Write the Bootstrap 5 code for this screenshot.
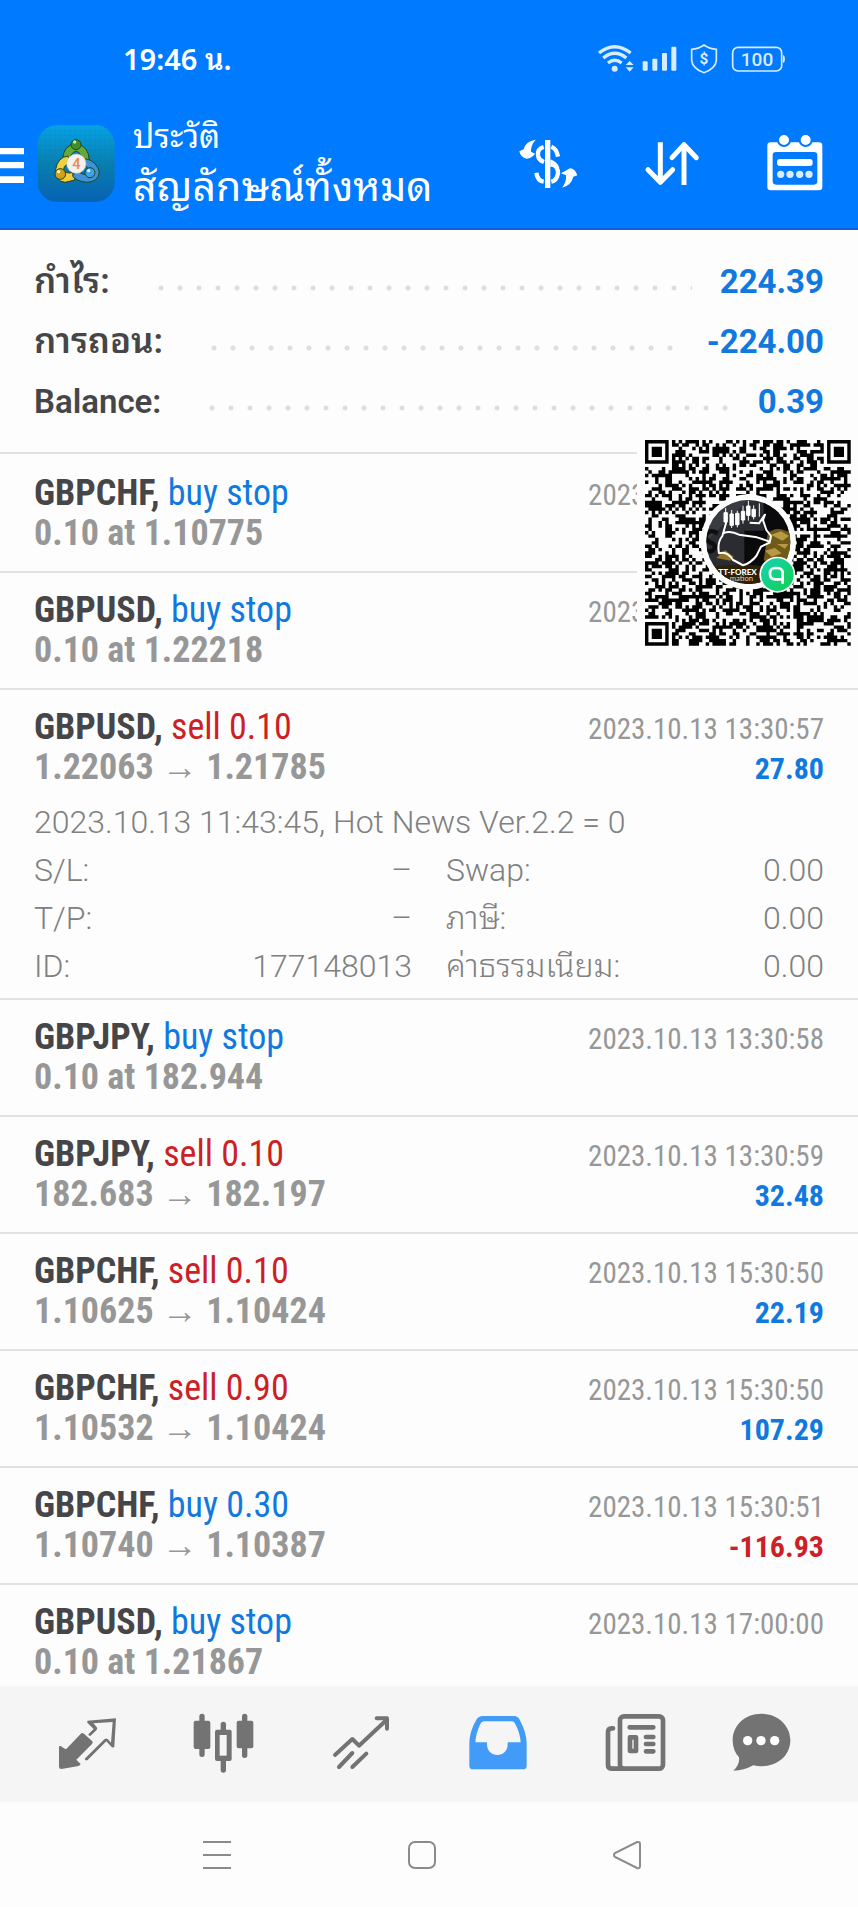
<!DOCTYPE html>
<html lang="th">
<head>
<meta charset="utf-8">
<meta name="viewport" content="width=device-width, initial-scale=1">
<title>ประวัติ</title>
<link href="https://cdn.jsdelivr.net/npm/bootstrap@5.3.0/dist/css/bootstrap.min.css" rel="stylesheet">
<style>
:root{--app-blue:#007aff;--buy:#1079e0;--sell:#cc1f26;--ink:#464649;--muted:#979797;--line:#e2e2e2;--thai:"Noto Sans Thai Looped","Noto Looped Thai","Droid Sans Thai",Loma,Waree,Garuda,"Noto Sans Thai","Noto Sans",sans-serif;}
body{font-family:Roboto,var(--thai);background:#fdfdfd;color:var(--ink);}
.app-head{background:var(--app-blue);color:#fff;border-bottom:2px solid #1262d6;}
.status-bar{height:96px;padding:22px 71px 0 123px;font:600 29px/40px "Noto Sans",var(--thai);}
.title-bar{height:132px;padding-right:23px;}
.icon-btn{border:0;background:none;padding:0;color:inherit;display:block;}
.icon-btn svg,.status-bar svg{display:block;}
.app-logo{margin-top:25px;margin-left:-1px;}
.titles{margin-left:18px;padding-top:21px;}
.title-small{font-size:33px;line-height:40px;}
.title-main{font-size:41px;line-height:60px;}
.head-tools{gap:44px;padding-top:35px;}
.history{min-height:0;}
.summary{padding:22px 34px 20px;border-bottom:2px solid var(--line);font-size:33px;line-height:60px;}
.sum-line{height:60px;}
.summary dt{font-weight:600;}
.summary dd{font-weight:700;color:var(--buy);}
.summary .thai-label{font-size:35px;}
.leader{height:6px;margin:12px 28px 0 48px;background:radial-gradient(circle at 3px 3px,#dedede 2px,transparent 3px) 0 0/19px 6px repeat-x;}
.deal{padding:17px 34px 18px;border-bottom:2px solid var(--line);line-height:40px;font-family:"Roboto Condensed","Liberation Sans Narrow",Roboto,sans-serif;}
.summary + .deal{padding-top:19px;}
.deal-open{padding-bottom:8px;}
.deal-line{height:40px;}
.deal-name{font-size:36px;font-weight:400;}
.deal-name b{font-weight:700;}
.deal-price{font-size:36px;font-weight:700;color:var(--muted);}
.deal-date{font-size:29px;color:var(--muted);}
.deal-sum{font-size:30px;font-weight:700;}
.buy{color:var(--buy);}
.sell{color:var(--sell);}
.deal-more{margin-top:11px;font-family:Roboto,var(--thai);font-weight:300;font-size:32px;line-height:48px;color:#808080;}
.deal-more dt{font-weight:300;}
.more-grid{display:grid;grid-template-columns:1fr 1fr;grid-auto-rows:48px;column-gap:34px;}
.qr-card{top:204px;right:0;width:221px;background:#fdfdfd;}
.tab-bar{background:#f5f5f5;height:116px;padding:0 20px;color:#737373;}
.tab-bar .active{color:#429cf7;}
.sys-bar{height:105px;padding:0 129px 0 115px;color:#8b8b8b;}
</style>
</head>
<body>
<div class="d-flex flex-column vh-100 overflow-hidden">
  <header class="app-head flex-shrink-0">
    <div class="status-bar d-flex align-items-center">
      <span>19:46 น.</span>
      <svg class="ms-auto" width="190" height="32" viewBox="500 124 570 96" fill="#d9ecff" aria-label="สถานะอุปกรณ์">
        <g fill="none" stroke="#d9ecff" stroke-width="10"><path d="M506 154Q553 116 601 154M519 169Q553 141 588 169M533 184Q553 168 574 184"/></g>
        <circle cx="553" cy="201" r="9"/><path d="M586 190l12-12 12 12zM586 197h24l-12 13z"/>
        <rect x="637" y="179" width="15" height="28" rx="3"/><rect x="666" y="171" width="15" height="36" rx="3"/><rect x="695" y="154" width="15" height="53" rx="3"/><rect x="723" y="135" width="15" height="72" rx="3"/>
        <path d="M821 130Q838 142 858 143V176Q856 200 821 213Q786 200 784 176V143Q804 142 821 130z" fill="none" stroke="#d9ecff" stroke-width="5"/>
        <text x="821" y="188" text-anchor="middle" font-family="Roboto,sans-serif" font-size="46" font-weight="700">$</text>
        <rect x="907" y="137" width="147" height="71" rx="16" fill="none" stroke="#d9ecff" stroke-width="5"/><path d="M1058 160q6 2 6 12t-6 12z"/>
        <text x="980" y="193" text-anchor="middle" font-family="Roboto,sans-serif" font-size="57" font-weight="500">100</text>
      </svg>
    </div>
    <div class="title-bar d-flex align-items-start">
      <button class="icon-btn" type="button" aria-label="เมนู"><svg width="38" height="96" viewBox="0 288 114 288" fill="#fff"><path d="M0 444h72v19H0zM0 486h72v19H0zM0 529h72v20H0z"/></svg></button>
      <svg class="app-logo flex-shrink-0" width="78" height="82" viewBox="112 363 234 246" role="img" aria-label="MetaTrader 4">
        <defs><linearGradient id="tile" x1="0" y1="0" x2="0" y2="1"><stop offset="0" stop-color="#06a3e6"/><stop offset=".5" stop-color="#087fae"/><stop offset="1" stop-color="#0762b4"/></linearGradient>
        <pattern id="mesh" width="15" height="15" patternUnits="userSpaceOnUse"><path d="M0 0H15M0 0V15" stroke="#0a6ca8" stroke-opacity=".35" stroke-width="2" fill="none"/></pattern></defs>
        <rect x="114" y="375" width="231" height="231" rx="58" fill="url(#tile)"/><rect x="114" y="375" width="231" height="231" rx="58" fill="url(#mesh)"/>
        <g stroke="#26441f" stroke-width="3">
          <path d="M189 478Q192 432 230 432Q266 436 269 480L250 494Q246 456 230 454Q212 456 208 486z" fill="#63a93b"/>
          <path d="M205 468Q174 472 168 508Q166 544 196 547L226 540L218 518Q196 522 192 508Q194 494 210 490z" fill="#f0cf3c"/>
          <path d="M258 476Q292 484 299 516Q296 546 262 547Q230 544 218 528L232 512Q252 528 268 522Q276 512 256 496z" fill="#3d93d6"/>
          <circle cx="229" cy="434" r="15" fill="#3f8f2f"/><circle cx="182" cy="522" r="16" fill="#cfa020"/><circle cx="271" cy="518" r="15" fill="#3ea2e8"/>
        </g>
        <circle cx="225" cy="426" r="5" fill="#c6e8a0"/><circle cx="177" cy="515" r="5" fill="#fff2a8"/><circle cx="267" cy="512" r="5" fill="#d4efff"/>
        <circle cx="230" cy="491" r="29" fill="#f4f1ee" stroke="#c8c2b4" stroke-width="2"/>
        <text x="230" y="507" text-anchor="middle" font-family="Roboto,sans-serif" font-size="44" font-weight="500" fill="#e88a50">4</text>
      </svg>
      <div class="titles text-nowrap">
        <div class="title-small">ประวัติ</div>
        <h1 class="title-main fw-normal m-0">สัญลักษณ์ทั้งหมด</h1>
      </div>
      <div class="head-tools d-flex ms-auto">
        <button class="icon-btn" type="button" aria-label="สัญลักษณ์"><svg width="80" height="64" viewBox="231 393 240 192" fill="#fff">
          <path d="M345 420h16v144h-16z"/><path d="M341 441Q322 446 324 466Q326 480 342 486M364 440Q380 446 384 470M364 490Q385 500 384 520Q380 542 364 545M341 545Q322 542 319 518" fill="none" stroke="#fff" stroke-width="13"/><path d="M361 478Q385 488 388 504L361 500z"/>
          <path d="M317 419Q286 424 281 448L268 454Q272 474 290 476Q306 474 315 461L303 455Q302 436 317 419zM396 563Q424 556 430 530L442 526Q436 506 420 505L393 520L408 526Q410 546 396 563z"/></svg></button>
        <button class="icon-btn" type="button" aria-label="เรียงลำดับ"><svg width="80" height="64" viewBox="603 393 240 192" fill="none" stroke="#fff" stroke-width="15"><path d="M691 427V550M762 555V434"/><path d="M654 509L691 547L728 509M726 473L762 434L799 473" stroke-linecap="round" stroke-linejoin="round"/></svg></button>
        <button class="icon-btn" type="button" aria-label="ช่วงเวลา"><svg width="80" height="64" viewBox="975 393 240 192" fill="#fff">
          <path fill-rule="evenodd" d="M1022 427H1167Q1177 427 1177 437V561Q1177 571 1167 571H1022Q1012 571 1012 561V437Q1012 427 1022 427zM1038 456Q1028 456 1028 466V544Q1028 554 1038 554H1152Q1162 554 1162 544V466Q1162 456 1152 456z"/>
          <circle cx="1062" cy="420" r="18" stroke="#007aff" stroke-width="6"/><circle cx="1127" cy="420" r="18" stroke="#007aff" stroke-width="6"/>
          <rect x="1041" y="477" width="107" height="21" rx="9"/><g fill="#d9ecff"><circle cx="1052" cy="523" r="11"/><circle cx="1080" cy="523" r="11"/><circle cx="1109" cy="523" r="11"/><circle cx="1137" cy="523" r="11"/></g></svg></button>
      </div>
    </div>
  </header>

  <main class="history flex-fill position-relative overflow-hidden">
    <dl class="summary m-0">
      <div class="sum-line d-flex align-items-center"><dt class="thai-label">กำไร:</dt><div class="leader flex-fill"></div><dd class="m-0">224.39</dd></div>
      <div class="sum-line d-flex align-items-center"><dt class="thai-label">การถอน:</dt><div class="leader flex-fill"></div><dd class="m-0">-224.00</dd></div>
      <div class="sum-line d-flex align-items-center"><dt>Balance:</dt><div class="leader flex-fill"></div><dd class="m-0">0.39</dd></div>
    </dl>

    <article class="deal">
      <div class="deal-line d-flex justify-content-between align-items-baseline"><span class="deal-name"><b>GBPCHF,</b> <span class="buy">buy stop</span></span><time class="deal-date">2023.10.13 11:43:42</time></div>
      <div class="deal-line deal-price">0.10 at 1.10775</div>
    </article>
    <article class="deal">
      <div class="deal-line d-flex justify-content-between align-items-baseline"><span class="deal-name"><b>GBPUSD,</b> <span class="buy">buy stop</span></span><time class="deal-date">2023.10.13 11:43:45</time></div>
      <div class="deal-line deal-price">0.10 at 1.22218</div>
    </article>
    <article class="deal deal-open">
      <div class="deal-line d-flex justify-content-between align-items-baseline"><span class="deal-name"><b>GBPUSD,</b> <span class="sell">sell 0.10</span></span><time class="deal-date">2023.10.13 13:30:57</time></div>
      <div class="deal-line d-flex justify-content-between align-items-baseline"><span class="deal-price">1.22063 → 1.21785</span><span class="deal-sum buy">27.80</span></div>
      <div class="deal-more">
        <div>2023.10.13 11:43:45, Hot News Ver.2.2 = 0</div>
        <dl class="more-grid m-0">
          <div class="d-flex justify-content-between"><dt>S/L:</dt><dd class="m-0">–</dd></div>
          <div class="d-flex justify-content-between"><dt>Swap:</dt><dd class="m-0">0.00</dd></div>
          <div class="d-flex justify-content-between"><dt>T/P:</dt><dd class="m-0">–</dd></div>
          <div class="d-flex justify-content-between"><dt>ภาษี:</dt><dd class="m-0">0.00</dd></div>
          <div class="d-flex justify-content-between"><dt>ID:</dt><dd class="m-0">177148013</dd></div>
          <div class="d-flex justify-content-between"><dt>ค่าธรรมเนียม:</dt><dd class="m-0">0.00</dd></div>
        </dl>
      </div>
    </article>
    <article class="deal">
      <div class="deal-line d-flex justify-content-between align-items-baseline"><span class="deal-name"><b>GBPJPY,</b> <span class="buy">buy stop</span></span><time class="deal-date">2023.10.13 13:30:58</time></div>
      <div class="deal-line deal-price">0.10 at 182.944</div>
    </article>
    <article class="deal">
      <div class="deal-line d-flex justify-content-between align-items-baseline"><span class="deal-name"><b>GBPJPY,</b> <span class="sell">sell 0.10</span></span><time class="deal-date">2023.10.13 13:30:59</time></div>
      <div class="deal-line d-flex justify-content-between align-items-baseline"><span class="deal-price">182.683 → 182.197</span><span class="deal-sum buy">32.48</span></div>
    </article>
    <article class="deal">
      <div class="deal-line d-flex justify-content-between align-items-baseline"><span class="deal-name"><b>GBPCHF,</b> <span class="sell">sell 0.10</span></span><time class="deal-date">2023.10.13 15:30:50</time></div>
      <div class="deal-line d-flex justify-content-between align-items-baseline"><span class="deal-price">1.10625 → 1.10424</span><span class="deal-sum buy">22.19</span></div>
    </article>
    <article class="deal">
      <div class="deal-line d-flex justify-content-between align-items-baseline"><span class="deal-name"><b>GBPCHF,</b> <span class="sell">sell 0.90</span></span><time class="deal-date">2023.10.13 15:30:50</time></div>
      <div class="deal-line d-flex justify-content-between align-items-baseline"><span class="deal-price">1.10532 → 1.10424</span><span class="deal-sum buy">107.29</span></div>
    </article>
    <article class="deal">
      <div class="deal-line d-flex justify-content-between align-items-baseline"><span class="deal-name"><b>GBPCHF,</b> <span class="buy">buy 0.30</span></span><time class="deal-date">2023.10.13 15:30:51</time></div>
      <div class="deal-line d-flex justify-content-between align-items-baseline"><span class="deal-price">1.10740 → 1.10387</span><span class="deal-sum sell">-116.93</span></div>
    </article>
    <article class="deal">
      <div class="deal-line d-flex justify-content-between align-items-baseline"><span class="deal-name"><b>GBPUSD,</b> <span class="buy">buy stop</span></span><time class="deal-date">2023.10.13 17:00:00</time></div>
      <div class="deal-line deal-price">0.10 at 1.21867</div>
    </article>

    <div class="qr-card position-absolute">
      <svg class="d-block" width="220" height="218" viewBox="0 0 660 654" role="img" aria-label="QR TT-FOREX">
        <defs><clipPath id="disc"><circle cx="334" cy="324" r="126"/></clipPath>
        <linearGradient id="mint" x1="0" y1="0" x2="1" y2="1"><stop offset="0" stop-color="#16d3b5"/><stop offset="1" stop-color="#12cf4c"/></linearGradient></defs>
        <path id="modules" fill="#000"/>
        <circle cx="334" cy="324" r="143" fill="#fdfdfd"/>
        <g clip-path="url(#disc)">
          <path fill="#2a2c31" d="M200 190h270v270H200z"/><path fill="#43474e" d="M200 330L330 200V190H200z" opacity=".6"/>
          <path fill="#0a0a0c" d="M322 290h72v176h-72zM380 190h90v100h-90z"/>
          <path d="M242 298Q214 282 206 306Q206 322 226 328Q242 338 226 350Q212 356 202 344" fill="none" stroke="#0d0d10" stroke-width="13"/>
          <path fill="#6f5a17" d="M392 300Q420 270 462 300V380H380z"/><path fill="#b89a45" d="M402 302l30-10 24 14-20 14zM384 350l30-8 20 16-30 10zM420 330h34l-10 14z"/>
          <path fill="#2d2008" d="M210 400Q330 380 460 410V460H210z"/><path fill="#937326" d="M238 372l26-24 26 20-10 12z"/>
          <path d="M268 264L256 306Q240 326 246 358Q270 350 288 378Q308 388 318 394Q340 388 358 366L372 338L398 326L402 306L388 288L378 258L384 242L366 268L338 266M258 298Q280 288 306 302L360 310L396 322" fill="none" stroke="#fff" stroke-width="6" stroke-linejoin="round"/>
          <g fill="#fff" stroke="#fff" stroke-width="3"><path d="M266 222v48M284 228v54M301 230v50M318 215v54M334 200v60M350 214v42M367 208v40"/><path d="M261 236h10v28h-10zM279 240h10v34h-10zM296 238h10v34h-10zM313 232h10v26h-10zM329 216h10v28h-10zM345 226h10v22h-10z"/></g>
          <text x="278" y="442" font-family="Lato,sans-serif" font-size="23" fill="#e8cfa4">mation</text>
        </g>
        <text x="244" y="423" font-family="Lato,sans-serif" font-size="24" font-weight="900" fill="#fff">TT-FOREX</text>
        <circle cx="421" cy="422" r="54" fill="#fdfdfd"/><circle cx="421" cy="422" r="49" fill="url(#mint)"/>
        <path d="M437 446V418Q437 402 421 402H415Q399 402 399 418V420Q399 436 415 436H430" fill="none" stroke="#fff" stroke-width="8" stroke-linecap="round"/>
      </svg>
    </div>
  </main>

  <nav class="tab-bar d-flex align-items-center flex-shrink-0" aria-label="แท็บหลัก">
    <button class="icon-btn flex-fill" type="button" aria-label="ราคา"><svg class="d-block mx-auto" width="80" height="64" viewBox="144 96 240 192" fill="currentColor">
      <path d="M244 160Q248 157 252 161L277 184Q280 188 276 192L229 239L242 252Q240 258 232 259L184 267Q177 267 177 260V199Q182 196 187 202L198 208z"/>
      <path d="M262 122L348 115L343 200Q338 206 332 198L319 184L263 240Q256 244 254 236L314 177Q319 173 324 178L333 188L338 126L280 130L290 141Q294 147 289 151L271 168Q265 168 265 163L281 147L262 128z"/></svg></button>
    <button class="icon-btn flex-fill" type="button" aria-label="กราฟ"><svg class="d-block mx-auto" width="80" height="64" viewBox="553 96 240 192" fill="currentColor">
      <rect x="582" y="122" width="50" height="85" rx="6"/><rect x="599" y="101" width="16" height="130" rx="8"/><rect x="711" y="122" width="50" height="83" rx="6"/><rect x="727" y="101" width="16" height="133" rx="8"/>
      <rect x="663" y="125" width="16" height="153" rx="8"/><rect x="646" y="149" width="50" height="94" rx="6"/><path fill="#f5f5f5" d="M660 165h21v62h-21z"/></svg></button>
    <button class="icon-btn flex-fill" type="button" aria-label="เทรด"><svg class="d-block mx-auto" width="80" height="64" viewBox="962 96 240 192" fill="none" stroke="currentColor" stroke-width="12" stroke-linecap="round" stroke-linejoin="round">
      <path d="M1004 225L1056 177L1076 197L1156 122M1016 261L1056 219M1056 261L1098 221"/><path d="M1129 115H1160V146" /></svg></button>
    <button class="icon-btn flex-fill active" type="button" aria-label="ประวัติ"><svg class="d-block mx-auto" width="80" height="64" viewBox="81 96 240 192" fill="currentColor">
      <path fill-rule="evenodd" d="M158 108H252Q264 108 269 119Q290 158 290 190V257Q290 268 279 268H129Q118 268 118 257V190Q118 155 139 119Q146 108 158 108zM162 124Q155 124 151 132Q138 158 136 187H171V193C171 236 233 236 233 193V187H272Q270 158 256 132Q253 124 246 124z"/></svg></button>
    <button class="icon-btn flex-fill" type="button" aria-label="ข่าว"><svg class="d-block mx-auto" width="80" height="64" viewBox="490 96 240 192" fill="none" stroke="currentColor" stroke-width="14">
      <rect x="571" y="109" width="129" height="157" rx="12"/><path d="M550 145H546Q535 145 535 156V254Q535 266 548 266H580" stroke-linecap="round"/>
      <path d="M600 142H671M649 171H671M649 192H671M649 214H671" stroke-linecap="round"/><path d="M601 172h18v41h-18z" stroke-linejoin="round"/></svg></button>
    <button class="icon-btn flex-fill" type="button" aria-label="ข้อความ"><svg class="d-block mx-auto" width="80" height="64" viewBox="899 96 240 192" fill="currentColor">
      <path d="M993 101C1043 101 1080 137 1080 181C1080 228 1040 259 993 259Q980 259 969 256Q940 272 909 272Q929 255 926 232Q907 212 907 181C907 137 943 101 993 101z"/><g fill="#fff"><circle cx="952" cy="182" r="14"/><circle cx="992" cy="182" r="14"/><circle cx="1033" cy="182" r="14"/></g></svg></button>
  </nav>

  <nav class="sys-bar d-flex align-items-center flex-shrink-0" aria-label="ระบบ">
    <button class="icon-btn flex-fill" type="button" aria-label="แอปล่าสุด"><svg class="d-block mx-auto" width="30" height="30" viewBox="0 0 30 30" fill="none" stroke="currentColor" stroke-width="2"><path d="M1 2h28M1 15h28M1 28h28"/></svg></button>
    <button class="icon-btn flex-fill" type="button" aria-label="หน้าหลัก"><svg class="d-block mx-auto" width="30" height="30" viewBox="0 0 30 30" fill="none" stroke="currentColor" stroke-width="2"><rect x="2" y="2" width="26" height="26" rx="6"/></svg></button>
    <button class="icon-btn flex-fill" type="button" aria-label="ย้อนกลับ"><svg class="d-block mx-auto" width="30" height="30" viewBox="0 0 30 30" fill="none" stroke="currentColor" stroke-width="2"><path d="M26 2Q28 2 28 4V26Q28 29 25 28L3 17Q1 15 3 13L25 2z"/></svg></button>
  </nav>
</div>
<script src="https://cdn.jsdelivr.net/npm/bootstrap@5.3.0/dist/js/bootstrap.bundle.min.js"></script>
<script>
// QR modules: 61 by 61 grid with three finder squares and seeded data cells
(function () {
  const n = 61, x0 = 24, y0 = 18, step = 617 / n;
  let seed = 20231013, d = '';
  const next = () => (seed = (seed * 1103515245 + 12345) % 2147483648) / 2147483648;
  const finder = (r, c) => {
    const fr = r < 8 ? r : r > n - 9 ? r - (n - 7) : null;
    const fc = c < 8 ? c : c > n - 9 ? c - (n - 7) : null;
    if (fr === null || fc === null || (r > n - 9 && c > n - 9)) return null;
    if (fr < 0 || fr > 6 || fc < 0 || fc > 6) return false;
    const k = Math.max(Math.abs(fr - 3), Math.abs(fc - 3));
    return k !== 2;
  };
  for (let r = 0; r < n; r++) for (let c = 0; c < n; c++) {
    const f = finder(r, c), bit = next() < 0.52;
    if (f === null ? bit : f) d += `M${(x0 + c * step).toFixed(1)} ${(y0 + r * step).toFixed(1)}h10.3v10.3h-10.3z`;
  }
  document.getElementById('modules').setAttribute('d', d);
})();
</script>
</body>
</html>
